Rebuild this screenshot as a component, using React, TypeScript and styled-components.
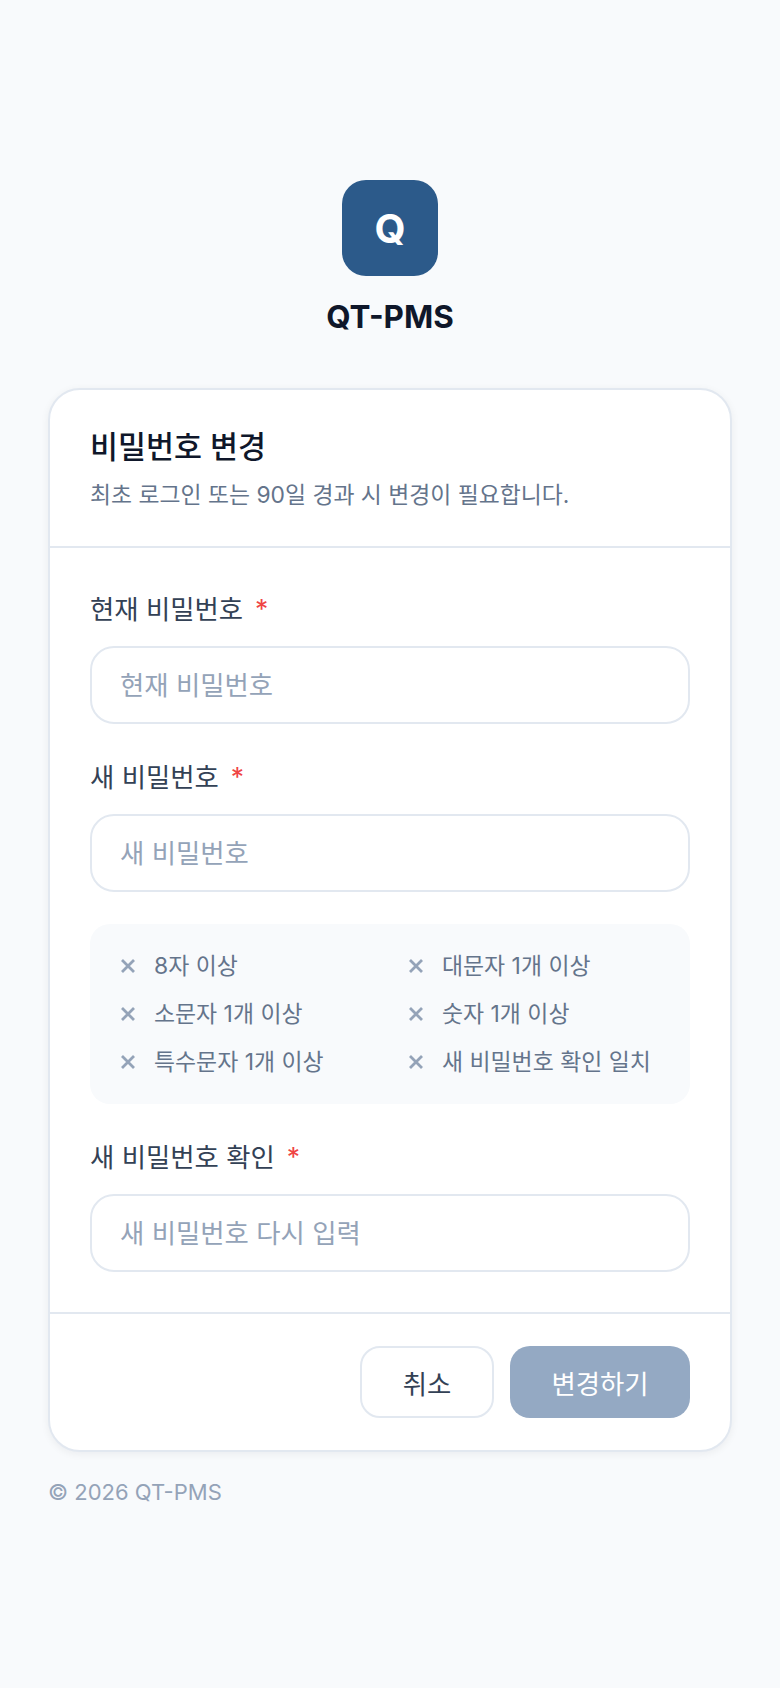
import React from "react";
import styled, { createGlobalStyle } from "styled-components";

const Global = createGlobalStyle`
  html, body { margin: 0; padding: 0; background: #f8fafc; }
  * { box-sizing: border-box; }
  body { font-family: Inter, "Noto Sans CJK KR", sans-serif; }
`;
const Page = styled.div`
  min-height: 1688px; padding: 0 48px; display: flex; flex-direction: column; justify-content: center;
`;
const Brand = styled.div`
  display: flex; flex-direction: column; align-items: center; margin-bottom: 47px;
`;
const Logo = styled.div`
  width: 96px; height: 96px; border-radius: 24px; background: #2c5a8a; color: #fff;
  display: flex; align-items: center; justify-content: center; font-size: 40px; font-weight: 700; margin-bottom: 17px;
`;
const BrandName = styled.div`
  font-size: 31.4px; line-height: 48px; font-weight: 700; color: #0f172a;
`;
const Card = styled.div`
  background: #fff; border: 2px solid #e2e8f0; border-radius: 32px; box-shadow: 0 2px 8px rgba(15,23,42,.06);
`;
const Head = styled.div`
  padding: 36px 40px 34px; border-bottom: 2px solid #e2e8f0;
`;
const Title = styled.h1`
  margin: 0 0 10px; font-size: 30.4px; line-height: 42px; font-weight: 500; color: #0f172a;
`;
const Sub = styled.p`
  margin: 0; font-size: 22.85px; line-height: 34px; color: #64748b;
`;
const Body = styled.div`
  padding: 40px; display: flex; flex-direction: column; gap: 32px;
`;
const Field = styled.div`
  display: flex; flex-direction: column; gap: 16px;
`;
const Label = styled.label`
  display: flex; gap: 12px; font-size: 26.4px; line-height: 42px; font-weight: 400; color: #334155;
`;
const Star = styled.span`
  color: #ef4444;
`;
const Input = styled.input`
  width: 100%; height: 78px; padding: 0 28px; border: 2px solid #e2e8f0; border-radius: 24px; background: #fff;
  font: 400 26.4px Inter, "Noto Sans CJK KR", sans-serif; color: #334155; outline: none;
  &::placeholder { color: #94a3b8; opacity: 1; }
`;
const Rules = styled.ul`
  list-style: none; margin: 0; padding: 26px 28px; background: #f8fafc; border-radius: 20px;
  display: grid; grid-template-columns: 1fr 1fr; gap: 16px 32px;
`;
const Rule = styled.li`
  display: flex; align-items: center; gap: 16px; font-size: 22.9px; line-height: 32px; color: #64748b; white-space: nowrap;
`;
const Cross = styled.svg`
  width: 20px; height: 20px; flex: none; color: #94a3b8;
`;
const Foot = styled.div`
  padding: 32px 40px; border-top: 2px solid #e2e8f0; display: flex; justify-content: flex-end; gap: 16px;
`;
const Button = styled.button<{ $primary?: boolean }>`
  height: 72px; width: ${p => (p.$primary ? 180 : 134)}px; padding: 0; border-radius: 20px;
  border: ${p => (p.$primary ? "none" : "2px solid #e2e8f0")};
  background: ${p => (p.$primary ? "#94a9c3" : "#fff")};
  color: ${p => (p.$primary ? "#fff" : "#334155")};
  font: 400 26.4px Inter, "Noto Sans CJK KR", sans-serif;
`;
const Copy = styled.div`
  margin-top: 24px; font-size: 22px; line-height: 32px; color: #94a3b8;
`;

const X = () => (
  <Cross viewBox="0 0 20 20" fill="none" stroke="currentColor" strokeWidth="2.8" aria-hidden="true">
    <path d="M4 4 L16 16 M16 4 L4 16" />
  </Cross>
);

const rules = ["8자 이상", "대문자 1개 이상", "소문자 1개 이상", "숫자 1개 이상", "특수문자 1개 이상", "새 비밀번호 확인 일치"];

const PasswordField = ({ label, placeholder }: { label: string; placeholder: string }) => (
  <Field>
    <Label>{label} <Star>*</Star></Label>
    <Input type="password" placeholder={placeholder} />
  </Field>
);

export default function App() {
  return (
    <Page>
      <Global />
      <Brand>
        <Logo>Q</Logo>
        <BrandName>QT-PMS</BrandName>
      </Brand>
      <Card>
        <Head>
          <Title>비밀번호 변경</Title>
          <Sub>최초 로그인 또는 90일 경과 시 변경이 필요합니다.</Sub>
        </Head>
        <Body>
          <PasswordField label="현재 비밀번호" placeholder="현재 비밀번호" />
          <PasswordField label="새 비밀번호" placeholder="새 비밀번호" />
          <Rules>
            {rules.map(r => <Rule key={r}><X />{r}</Rule>)}
          </Rules>
          <PasswordField label="새 비밀번호 확인" placeholder="새 비밀번호 다시 입력" />
        </Body>
        <Foot>
          <Button>취소</Button>
          <Button $primary>변경하기</Button>
        </Foot>
      </Card>
      <Copy>© 2026 QT-PMS</Copy>
    </Page>
  );
}
